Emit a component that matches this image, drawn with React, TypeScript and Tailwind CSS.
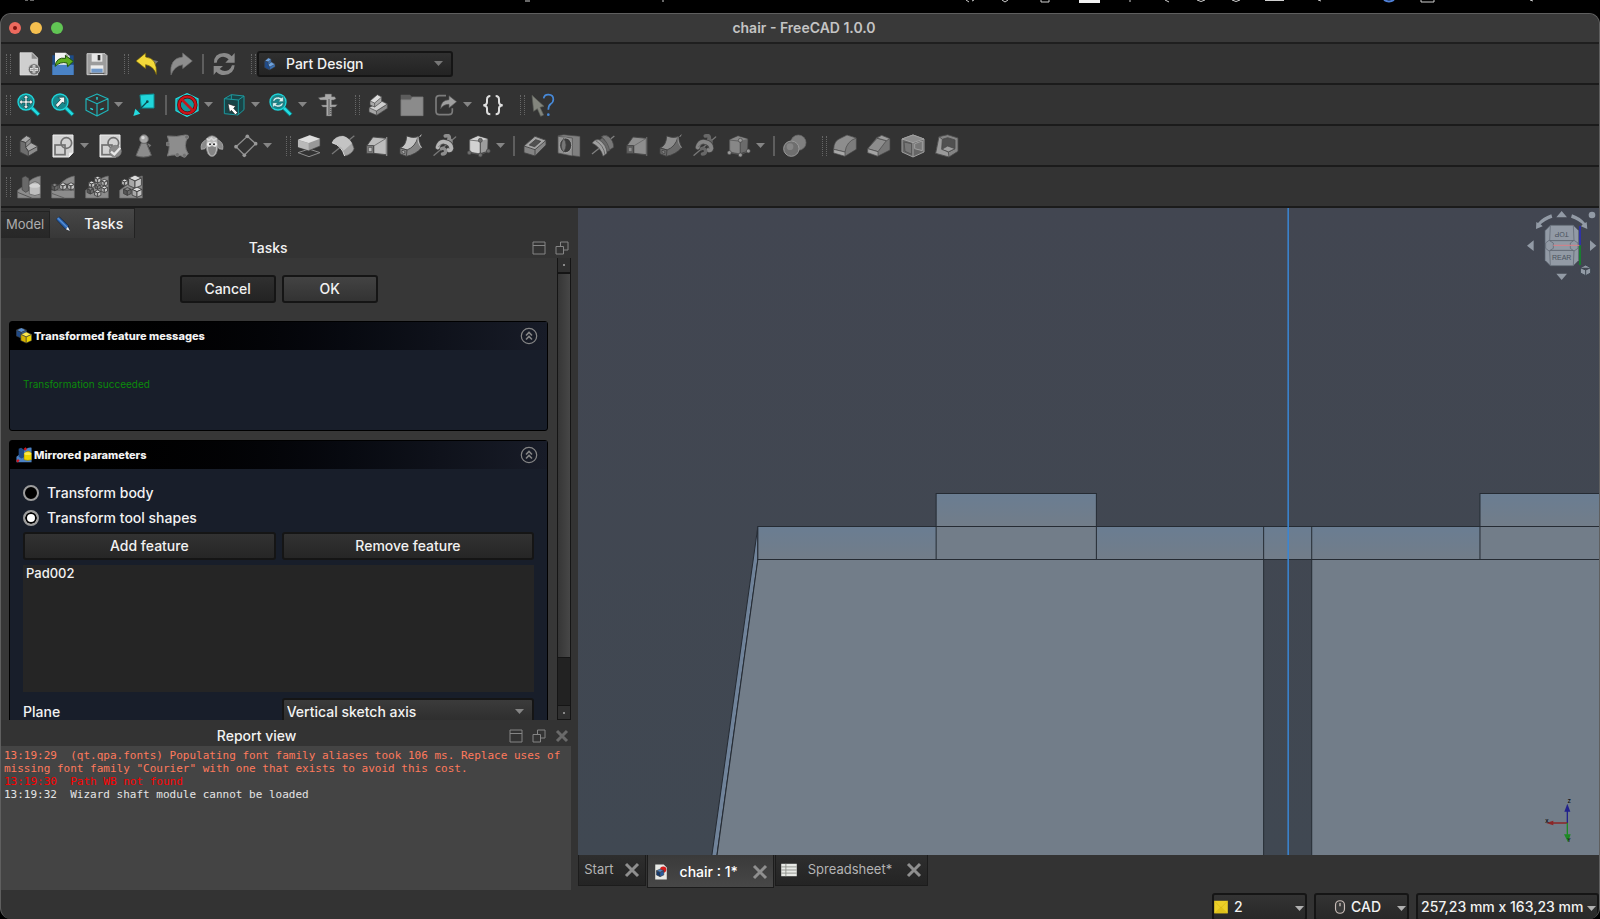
import { Fragment, type ReactNode } from 'react'

type CubeProps = { x: number; y: number; s: number; c?: [string, string, string] }

const LIGHT: [string, string, string] = ['#dcdcdc', '#a8a8a8', '#c4c4c4']
const MID: [string, string, string] = ['#a6a6a6', '#6c6c6c', '#8a8a8a']
const DARK: [string, string, string] = ['#858585', '#565656', '#6b6b6b']

// isometric cube, x/y is the centre and s the edge length
const Cube = ({ x, y, s, c = LIGHT }: CubeProps) => {
	const w = s * 0.87
	const h = s * 0.4
	return (
		<g stroke="#3c3c3c" strokeWidth="2.5" strokeLinejoin="round">
			<path d={`M${x - w} ${y - h}L${x} ${y - 2 * h}L${x + w} ${y - h}L${x} ${y}Z`} fill={c[0]} />
			<path d={`M${x - w} ${y - h}L${x} ${y}V${y + s}L${x - w} ${y + s - h}Z`} fill={c[1]} />
			<path d={`M${x + w} ${y - h}L${x} ${y}V${y + s}L${x + w} ${y + s - h}Z`} fill={c[2]} />
		</g>
	)
}

const Lens = ({ children }: { children: ReactNode }) => (
	<>
		<path d="M44 44L66 66" stroke="#0d6f74" strokeWidth="13" />
		<path d="M45 45L65 65" stroke="#22dbe0" strokeWidth="8" />
		<circle cx="27" cy="27" r="24" fill="#17888d" stroke="#1fd3d8" strokeWidth="4" />
		{children}
	</>
)

const Ramp = () => (
	<path d="M2 46L26 28Q48 6 70 3V69H2Z" fill="#8c8c8c" stroke="#6a6a6a" strokeWidth="2" />
)

const loft = (a: string, b: string) => (
	<g stroke="#404040" strokeWidth="2.5" strokeLinejoin="round">
		<path d="M5 36L24 9L64 13V64L26 58L6 58Z" fill={b} />
		<path d="M24 9L64 13V62L26 58V36L5 36Z" fill={a} />
		<path d="M26 36L62 14" stroke="#666" />
		<path d="M5 35H26V58H5Z" fill={b} />
		<path d="M10 40H21V53H10Z" fill={a} stroke="#555" />
		<path d="M65 9V66" stroke={b} strokeWidth="4" />
	</g>
)

const pipe = (a: string, b: string) => (
	<g stroke="#404040" strokeWidth="2.5" strokeLinejoin="round">
		<path d="M23 6Q42 14 57 8L68 41Q50 62 22 67L3 59V42Q22 34 23 6Z" fill={b} />
		<path d="M23 6Q42 14 57 8Q50 38 24 48L4 42Q22 34 23 6Z" fill={a} />
		<path d="M3 42L24 48L22 67L3 59Z" fill={b} />
		<path d="M9 49L18 52L17 59L9 56Z" fill={a} />
		<path d="M57 8Q56 30 68 41M67 2L62 9" fill="none" stroke={a} strokeWidth="3" />
	</g>
)

const helix = (a: string, b: string) => (
	<g fill="none" strokeLinecap="round">
		<path d="M3 64L68 9" stroke="#777" strokeWidth="4" />
		<path d="M37 6Q52 2 48 15Q58 22 50 34" stroke={b} strokeWidth="11" />
		<path d="M14 40Q20 20 36 24Q54 27 55 43Q54 50 46 48" stroke="#444" strokeWidth="16" />
		<path d="M14 40Q20 20 36 24Q54 27 55 43Q54 50 46 48" stroke={a} strokeWidth="12" />
		<path d="M25 44Q34 40 38 50Q38 60 28 60" stroke={b} strokeWidth="10" />
		<path d="M17 38Q26 26 38 32Q46 36 48 43" stroke="#555" strokeWidth="2" />
	</g>
)

const primitive = (c: [string, string, string], dot: string) => (
	<>
		<path d="M8 17L33 5L63 15L62 52L36 60L8 54Z" fill={c[2]} stroke="#444" strokeWidth="2" />
		<path d="M8 17L33 7L62 15L40 21Z" fill={c[0]} />
		<path d="M8 18L40 22V60L8 54Z" fill={c[0]} stroke="#555" strokeWidth="2" />
		<path d="M40 20V62L7 56M40 62L64 52" fill="none" stroke="#555" strokeWidth="3" />
		<g fill={dot} stroke="#444" strokeWidth="2">
			<circle cx="40" cy="19" r="6" />
			<circle cx="7" cy="56" r="6" />
			<circle cx="40" cy="63" r="6" />
			<circle cx="64" cy="51" r="6" />
		</g>
	</>
)

const sketch = (
	<>
		<path d="M6 3H66V56L54 69H6Z" fill="#d2d2d2" stroke="#efefef" strokeWidth="3" />
		<path d="M66 56H54V69Z" fill="#f2f2f2" />
		<g fill="none" stroke="#707070" strokeWidth="5">
			<rect x="12" y="33" width="30" height="29" />
			<circle cx="46" cy="27" r="16" />
		</g>
	</>
)

const body = (c: [string, string, string]) => (
	<g stroke="#3c3c3c" strokeWidth="2.5" strokeLinejoin="round">
		<path d="M9 20L28 5L42 12V26L62 37V50L34 67L9 54Z" fill={c[2]} />
		<path d="M9 20L28 5L42 12L26 26Z" fill={c[0]} />
		<path d="M26 40L42 26L62 37L34 52Z" fill={c[0]} />
		<path d="M9 20L26 26V40L34 52V67L9 54Z" fill={c[1]} />
	</g>
)

const icons: Record<string, ReactNode> = {
	'New document': (
		<>
			<path d="M9 2H46L62 18V69H9Z" fill="#cfcfcf" stroke="#e2e2e2" strokeWidth="2" />
			<path d="M44 2L62 20H44Z" fill="#8e8e8e" />
			<circle cx="51" cy="52" r="17" fill="#6e6e6e" stroke="#c8c8c8" strokeWidth="2.5" />
			<path d="M51 40V64M39 52H63" stroke="#f0f0f0" strokeWidth="8" />
			<path d="M51 41V63M40 52H62" stroke="#a2a2a2" strokeWidth="4" />
		</>
	),
	Open: (
		<>
			<path d="M4 10H68V68H4Z" fill="#1d4b87" />
			<path d="M12 2H44L56 12V50H12Z" fill="#f4f4f4" />
			<path d="M44 2L56 13H44Z" fill="#b0b0b0" />
			<path d="M4 38H68V69H4Z" fill="#4a83c6" />
			<path d="M12 43Q16 14 44 19L43 10L67 28L50 44L48 33Q28 28 12 43Z" fill="#5fae1f" stroke="#20500a" strokeWidth="3" />
		</>
	),
	Save: (
		<>
			<path d="M6 5H60L66 11V68H6Z" fill="#9c9c9c" stroke="#c8c8c8" strokeWidth="3" />
			<rect x="20" y="5" width="32" height="24" fill="#e6e6e6" />
			<rect x="38" y="9" width="8" height="16" fill="#333" />
			<rect x="17" y="40" width="38" height="28" fill="#ececec" />
			<rect x="19" y="50" width="34" height="12" fill="#7198c8" />
			<path d="M14 64H58" stroke="#444" strokeWidth="3" />
		</>
	),
	Undo: (
		<>
			<path d="M44 22L70 28L52 46Z" fill="#777" />
			<path d="M3 27L32 3V15Q68 18 64 68Q56 42 32 38V50Z" fill="#f3d93a" stroke="#6b5a08" strokeWidth="2" />
		</>
	),
	Redo: <path d="M70 27L41 3V15Q0 18 6 69Q16 42 41 38V50Z" fill="#8d8d8d" stroke="#6a6a6a" strokeWidth="2" />,
	Refresh: (
		<g fill="#8a8a8a">
			<path d="M6 32Q6 4 36 3Q50 3 59 13L68 3V32H40L50 22Q36 9 22 18Q14 24 14 32Z" />
			<path d="M68 40Q66 68 36 69Q22 69 13 59L5 69V42H33L23 51Q36 62 50 54Q58 48 60 40Z" />
		</g>
	),
	'Fit all': (
		<Lens>
			<path d="M27 6L35 15H30V24H39V19L48 27L39 35V30H30V39H35L27 48L19 39H24V30H15V35L6 27L15 19V24H24V15H19Z" fill="#e9e9e9" stroke="#14494c" strokeWidth="2" />
		</Lens>
	),
	'Fit selection': (
		<Lens>
			<path d="M41 12V33L35 27L20 43L13 36L28 20L21 13Z" fill="#f2f2f2" stroke="#14494c" strokeWidth="2.5" />
		</Lens>
	),
	Isometric: (
		<g fill="none" stroke="#1fb4b9" strokeWidth="3.5" strokeLinejoin="round">
			<path d="M36 3L69 17V52L36 69L3 52V17ZM3 17L36 32L69 17M36 32V69" />
			<path d="M36 12V20M16 46L24 50M46 50L56 46" stroke="#26dfe4" strokeWidth="4" />
		</g>
	),
	'Align to selection': (
		<>
			<path d="M24 6L66 3V45L28 45Z" fill="#21d5da" stroke="#0c8e93" strokeWidth="3" />
			<path d="M46 26L14 58" stroke="#0b4d50" strokeWidth="4" />
			<path d="M4 69L10 47L25 62Z" fill="#24dbe0" />
			<circle cx="46" cy="26" r="4" fill="#0b4d50" />
		</>
	),
	'Draw style': (
		<>
			<path d="M36 2L69 18V53L36 70L3 53V18Z" fill="#14979c" stroke="#24d8dd" strokeWidth="4" />
			<circle cx="37" cy="36" r="25" fill="none" stroke="#5a0808" strokeWidth="11" />
			<circle cx="37" cy="36" r="25" fill="none" stroke="#c8141a" strokeWidth="7" />
			<path d="M20 19L54 53" stroke="#c8141a" strokeWidth="8" />
		</>
	),
	'Selection filter': (
		<>
			<path d="M7 17L28 5L66 9V50L48 66L7 62Z" fill="#194447" stroke="#1c9a9f" strokeWidth="3" strokeLinejoin="round" />
			<path d="M7 17L49 21L66 9M49 21V66M28 5V20" fill="none" stroke="#1c9a9f" strokeWidth="3" />
			<path d="M18 32L41 40L35 46L47 59L40 65L28 52L23 58Z" fill="#fff" stroke="#222" strokeWidth="2" />
		</>
	),
	Zoom: (
		<Lens>
			<path d="M11 25Q14 11 29 12L38 15L43 10V26H28L33 20Q21 15 16 25ZM43 30Q40 44 25 42L16 39L11 44V29H26L21 35Q33 39 38 30Z" fill="#d9f3f3" stroke="#14595c" strokeWidth="1.5" />
		</Lens>
	),
	Measure: (
		<g fill="#a9a9a9" stroke="#5b5b5b" strokeWidth="1.5">
			<path d="M27 3H47V11H56L60 17L53 21H47V35H64L58 42H47V69H31V42H20L16 36H31V21H13L7 14L27 11Z" />
			<path d="M39 18V66M42 44H47M42 50H47M42 56H47M42 62H47" stroke="#555" strokeWidth="3" />
		</g>
	),
	'Create part': (
		<g stroke="#444" strokeWidth="2" strokeLinejoin="round">
			<path d="M9 44L48 24L64 33V46L32 67L9 57Z" fill="#a6a6a6" />
			<path d="M31 54L64 33V46L32 67Z" fill="#8e8e8e" />
			<path d="M9 44L46 24L64 33L31 54Z" fill="#cfcfcf" />
			<path d="M12 24L34 5L47 12V26L26 42L12 36Z" fill="#aaa" />
			<path d="M12 24L34 5L47 12L26 30Z" fill="#dcdcdc" />
			<path d="M26 30V42" />
		</g>
	),
	'Create group': (
		<>
			<path d="M2 5H30L36 11H70V69H2Z" fill="#5c5c5c" />
			<path d="M3 20H32L37 12H69V68H3Z" fill="#8b8b8b" stroke="#777" strokeWidth="2" />
		</>
	),
	'Link actions': (
		<>
			<path d="M36 8H16Q6 8 6 18V55Q6 65 16 65H44Q55 65 55 55V46" fill="none" stroke="#7c7c7c" strokeWidth="5" />
			<path d="M20 47Q20 21 45 20V8L68 26L45 45V34Q29 34 20 47Z" fill="#a0a0a0" stroke="#555" strokeWidth="2" />
		</>
	),
	Varset: (
		<g fill="none" stroke="#dedede" strokeWidth="6">
			<path d="M28 9Q18 9 18 20V28Q18 36 7 37Q18 38 18 46V54Q18 64 28 64" />
			<path d="M44 9Q54 9 54 20V28Q54 36 65 37Q54 38 54 46V54Q54 64 44 64" />
		</g>
	),
	"What's this": (
		<>
			<path d="M3 7L39 40L27 43L38 66L29 70L19 47L8 55Z" fill="#83857d" stroke="#5e605a" strokeWidth="2" />
			<path d="M38 16Q40 4 53 5Q67 6 67 19Q67 28 59 33Q52 38 52 50" fill="none" stroke="#4789d8" strokeWidth="5" />
			<circle cx="52" cy="65" r="4" fill="#4789d8" />
		</>
	),
	'Create body': body(['#aaaaaa', '#6e6e6e', '#8c8c8c']),
	'Create sketch': sketch,
	'Validate sketch': (
		<>
			{sketch}
			<circle cx="52" cy="52" r="18" fill="#8a8a8a" stroke="#777" strokeWidth="2" />
			<path d="M39 53L49 61L67 41" fill="none" stroke="#e8e8e8" strokeWidth="7" />
		</>
	),
	'Check geometry': (
		<>
			<path d="M28 27H43L58 64Q36 74 12 65Z" fill="#8c8c8c" stroke="#646464" strokeWidth="3" />
			<path d="M46 27L58 34L52 40Z" fill="#777" />
			<circle cx="36" cy="15" r="13" fill="#a6a6a6" stroke="#6a6a6a" strokeWidth="3" />
			<circle cx="33" cy="11" r="5" fill="#d8d8d8" />
		</>
	),
	'Shape binder': (
		<>
			<path d="M4 6Q32 10 58 3L66 8Q50 36 67 60L55 69Q32 58 4 66Q16 36 4 6Z" fill="#8d8d8d" stroke="#757575" strokeWidth="3" />
			<g fill="#707070" stroke="#999" strokeWidth="1.5">
				<circle cx="6" cy="30" r="6" />
				<circle cx="62" cy="9" r="6" />
				<circle cx="34" cy="62" r="6" />
				<circle cx="55" cy="64" r="6" />
			</g>
		</>
	),
	Clone: (
		<>
			<path d="M19 17Q0 26 4 46L15 44L22 26M53 17Q72 26 68 46L57 44L50 26" fill="#8a8a8a" stroke="#a5a5a5" strokeWidth="3" />
			<path d="M19 14Q36 -4 53 14L54 36Q52 66 36 68Q20 66 18 36Z" fill="#b9b9b9" stroke="#808080" strokeWidth="2" />
			<path d="M24 40Q36 34 48 40Q48 62 36 65Q25 62 24 40Z" fill="#858585" />
			<circle cx="28" cy="31" r="7" fill="#eee" />
			<circle cx="44" cy="31" r="7" fill="#eee" />
			<circle cx="30" cy="31" r="3" fill="#222" />
			<circle cx="42" cy="31" r="3" fill="#222" />
			<path d="M20 14L27 19L34 12L41 19L50 13" fill="none" stroke="#d5d5d5" strokeWidth="4" />
		</>
	),
	Datum: (
		<>
			<path d="M40 7L65 29L31 63L6 38Z" fill="none" stroke="#8e8e8e" strokeWidth="4" />
			<g fill="#999">
				<circle cx="40" cy="7" r="5.5" />
				<circle cx="65" cy="29" r="5.5" />
				<circle cx="31" cy="64" r="5.5" />
				<circle cx="6" cy="38" r="5.5" />
			</g>
		</>
	),
	Pad: (
		<g strokeLinejoin="round">
			<path d="M3 56L36 45L69 56L36 68Z" fill="none" stroke="#8c8c8c" strokeWidth="3" />
			<path d="M3 17L38 4L69 14V36L35 50L3 40Z" fill="#999" stroke="#484848" strokeWidth="2" />
			<path d="M3 17L38 4L69 14L35 27Z" fill="#dedede" />
			<path d="M3 18L35 28V49L3 39Z" fill="#b9b9b9" />
		</g>
	),
	Revolution: (
		<>
			<path d="M3 60L70 5" stroke="#777" strokeWidth="4" />
			<path d="M3 26Q12 6 36 6Q62 14 69 44Q64 60 41 66Q32 34 3 26Z" fill="#a6a6a6" stroke="#666" strokeWidth="2" />
			<path d="M3 26Q12 6 36 6Q54 11 63 28L38 50Q26 30 3 26Z" fill="#c4c4c4" />
			<path d="M3 26Q32 34 41 66" fill="none" stroke="#ddd" strokeWidth="3" />
		</>
	),
	'Additive loft': loft('#bdbdbd', '#858585'),
	'Additive pipe': pipe('#c4c4c4', '#848484'),
	'Additive helix': helix('#b5b5b5', '#8d8d8d'),
	'Additive primitive': primitive(['#d2d2d2', '#a0a0a0', '#9c9c9c'], '#6e6e6e'),
	Pocket: (
		<g stroke="#404040" strokeWidth="2.5" strokeLinejoin="round">
			<path d="M3 36L36 7L69 19V33L36 66L3 56Z" fill="#848484" />
			<path d="M3 36L36 7L69 19L36 47Z" fill="#a3a3a3" />
			<path d="M19 33L38 17L53 22L35 38Z" fill="#505050" />
			<path d="M36 47V66" />
		</g>
	),
	Hole: (
		<g stroke="#4a4a4a" strokeWidth="2">
			<path d="M3 5L20 2L69 7V68L46 65L3 57Z" fill="#808080" />
			<path d="M3 7L46 12V66L3 57Z" fill="#929292" />
			<ellipse cx="26" cy="34" rx="18" ry="22" fill="#3b3b3b" stroke="#bbb" />
			<path d="M20 13Q34 32 20 55Q6 38 20 13Z" fill="#777" />
		</g>
	),
	Groove: (
		<g stroke="#4b4b4b" strokeWidth="2">
			<path d="M3 60L70 6" stroke="#808080" strokeWidth="4" />
			<path d="M31 8Q42 0 53 8Q68 20 68 40L52 50Q50 24 31 8Z" fill="#777" />
			<path d="M22 20L34 12Q52 26 56 50L44 54Z" fill="#696969" />
			<path d="M3 27Q12 14 24 17Q47 32 48 58L36 67Q30 40 3 27Z" fill="#a0a0a0" />
			<path d="M14 20Q38 34 42 62" fill="none" />
		</g>
	),
	'Subtractive loft': loft('#8e8e8e', '#626262'),
	'Subtractive pipe': pipe('#8e8e8e', '#6a6a6a'),
	'Subtractive helix': helix('#858585', '#676767'),
	'Subtractive primitive': primitive(['#878787', '#5a5a5a', '#6b6b6b'], '#9a9a9a'),
	Boolean: (
		<>
			<circle cx="46" cy="26" r="23" fill="#7f7f7f" stroke="#666" strokeWidth="2" />
			<circle cx="25" cy="44" r="23" fill="#6f6f6f" stroke="#999" strokeWidth="3" />
			<circle cx="21" cy="38" r="10" fill="#858585" />
		</>
	),
	Fillet: (
		<g stroke="#474747" strokeWidth="2" strokeLinejoin="round">
			<path d="M2 46Q2 20 24 12L42 3L70 12V46L36 67L2 56Z" fill="#7c7c7c" />
			<path d="M2 46Q2 20 24 12L42 3L70 12Q40 22 36 54Z" fill="#8d8d8d" />
			<path d="M2 46L36 54V67L2 57Z" fill="#a8a8a8" />
		</g>
	),
	Chamfer: (
		<g stroke="#474747" strokeWidth="2" strokeLinejoin="round">
			<path d="M2 44L30 10L44 4L69 14V48L32 67L2 56Z" fill="#777" />
			<path d="M2 44L30 13L58 20L33 53Z" fill="#8d8d8d" />
			<path d="M30 12L44 4L69 14L58 20Z" fill="#9b9b9b" />
			<path d="M2 44L33 53V67L2 56Z" fill="#a3a3a3" />
		</g>
	),
	Draft: (
		<g stroke="#a0a0a0" strokeWidth="3" strokeLinejoin="round">
			<path d="M3 15L36 3L69 15V54L36 69L3 54Z" fill="#666" />
			<path d="M3 15L36 3L69 15L36 26Z" fill="#8c8c8c" />
			<path d="M9 24L32 29V61L12 52Z" fill="#777" stroke="#555" />
			<path d="M36 26V69M41 29L64 21V50L41 44Z" fill="#777" />
		</g>
	),
	Thickness: (
		<g stroke="#4a4a4a" strokeWidth="2.5" strokeLinejoin="round">
			<path d="M12 8L38 2L69 12V52L42 69L2 58Z" fill="#848484" />
			<path d="M22 16L38 11L60 18V44L40 54L20 46Z" fill="#505050" />
			<path d="M20 46L38 36L60 44L40 54Z" fill="#9d9d9d" />
			<path d="M12 8L22 16L20 46L40 54L42 69L2 58Z" fill="#9a9a9a" />
		</g>
	),
	Mirrored: (
		<>
			<Ramp />
			<path d="M15 8L25 3L36 10V46L26 52L15 44Z" fill="#696969" stroke="#3f3f3f" strokeWidth="2" />
			<path d="M37 32Q40 22 54 20Q68 22 70 32V57Q54 66 37 57Z" fill="#bdbdbd" stroke="#555" strokeWidth="2" />
			<ellipse cx="53" cy="32" rx="16" ry="6" fill="#d2d2d2" />
			<path d="M2 52L44 69" stroke="#555" strokeWidth="3" />
		</>
	),
	'Linear pattern': (
		<>
			<Ramp />
			<path d="M2 45H70" stroke="#555" strokeWidth="3" />
			<Cube x={11} y={35} s={12} c={DARK} />
			<Cube x={36} y={33} s={12} />
			<Cube x={60} y={33} s={12} />
			<path d="M2 55L40 69" stroke="#606060" strokeWidth="3" />
		</>
	),
	'Polar pattern': (
		<>
			<Ramp />
			<Cube x={38} y={13} s={11} />
			<Cube x={58} y={22} s={11} />
			<Cube x={20} y={27} s={11} />
			<Cube x={58} y={42} s={11} />
			<Cube x={16} y={46} s={11} c={DARK} />
			<Cube x={38} y={34} s={9} c={MID} />
			<Cube x={38} y={54} s={11} />
		</>
	),
	MultiTransform: (
		<>
			<Ramp />
			<Cube x={48} y={18} s={22} />
			<Cube x={17} y={21} s={11} />
			<Cube x={25} y={48} s={13} c={DARK} />
			<Cube x={54} y={50} s={17} />
		</>
	),
	Body: body(['#6ea3e0', '#1f4c8c', '#3a72b9']),
	Transformed: (
		<>
			<Cube x={24} y={20} s={26} c={['#5b8fd0', '#204a86', '#3465a4']} />
			<Cube x={46} y={40} s={28} c={['#fce94f', '#d6b300', '#edd400']} />
		</>
	),
	MirroredBlue: (
		<>
			<path d="M2 44L26 26Q50 0 70 3V69H2Z" fill="#4c82c4" />
			<path d="M12 8L23 3L36 12V46L24 52L12 44Z" fill="#204a86" />
			<path d="M36 32Q40 20 54 18Q68 20 70 32V57Q54 64 36 57Z" fill="#edd400" stroke="#7a6500" strokeWidth="2" />
			<ellipse cx="53" cy="30" rx="16" ry="6" fill="#fce94f" />
			<path d="M4 66L13 58M38 13L46 5" stroke="#d4141a" strokeWidth="10" />
		</>
	),
	Pencil: (
		<>
			<path d="M4 16L20 2L62 44L67 67L46 60Z" fill="#10233f" />
			<path d="M6 15L18 4L60 45L48 58Z" fill="#2b62ab" />
			<path d="M12 9L55 51" stroke="#5a92d8" strokeWidth="5" />
			<path d="M58 48L67 67L49 60Z" fill="#eee" />
		</>
	),
	Document: (
		<>
			<path d="M10 2H48L62 16V70H10Z" fill="#e8eae6" />
			<circle cx="46" cy="25" r="14" fill="#d41c1c" />
			<Cube x={32} y={38} s={19} c={['#4f86c8', '#143a70', '#275ca3']} />
		</>
	),
	Table: (
		<>
			<rect x="1" y="8" width="70" height="56" fill="#e8eae6" />
			<path d="M1 22H71M1 36H71M1 50H71M22 8V64" stroke="#8d8f8a" strokeWidth="4" />
		</>
	),
	Mouse: (
		<>
			<rect x="13" y="4" width="46" height="64" rx="22" fill="#3a3a3a" stroke="#c9bdb8" strokeWidth="6" />
			<path d="M36 16V32" stroke="#c9bdb8" strokeWidth="7" />
		</>
	),
	Notification: (
		<>
			<rect x="1" y="4" width="70" height="64" fill="#ecd028" />
			<path d="M1 68L36 34L71 68Z" fill="#dfc11a" />
			<path d="M1 4L36 40L71 4" fill="none" stroke="#d3b512" strokeWidth="3" />
		</>
	),
}

const Icon = ({ name, className = 'size-6' }: { name: string; className?: string }) => (
	<svg viewBox="0 0 72 72" className={`shrink-0 ${className}`} aria-hidden="true">
		{icons[name]}
	</svg>
)

const Triangle = ({ className = '' }: { className?: string }) => (
	<svg viewBox="0 0 9 5" className={`h-[5px] w-[9px] ${className}`} aria-hidden="true">
		<path d="M0 0H9L4.5 5Z" fill="currentColor" />
	</svg>
)

const Handle = ({ first = false }: { first?: boolean }) => (
	<div className={`flex h-5 shrink-0 justify-end ${first ? 'w-[11px]' : 'w-4'}`}>
		<div className="mr-px w-[5px] border-x border-dotted border-[#666]" />
	</div>
)

// '|' is a separator, '#' a drag handle and 'v' the drop-down arrow of the tool before it
const toolbars: string[][] = [
	['New document', 'Open', 'Save', '#', 'Undo', 'Redo', '|', 'Refresh', '#'],
	['Fit all', 'Fit selection', 'Isometric', 'v', 'Align to selection', '|', 'Draw style', 'v', 'Selection filter', 'v', 'Zoom', 'v', 'Measure', '#', 'Create part', 'Create group', 'Link actions', 'v', 'Varset', '#', "What's this"],
	['Create body', 'Create sketch', 'v', 'Validate sketch', 'Check geometry', 'Shape binder', 'Clone', 'Datum', 'v', '#', 'Pad', 'Revolution', 'Additive loft', 'Additive pipe', 'Additive helix', 'Additive primitive', 'v', '|', 'Pocket', 'Hole', 'Groove', 'Subtractive loft', 'Subtractive pipe', 'Subtractive helix', 'Subtractive primitive', 'v', '|', 'Boolean', '#', 'Fillet', 'Chamfer', 'Draft', 'Thickness'],
	['Mirrored', 'Linear pattern', 'Polar pattern', 'MultiTransform'],
]

const Toolbar = ({ tools, children }: { tools: string[]; children?: ReactNode }) => (
	<div role="toolbar" className="flex h-[41px] shrink-0 items-center border-b-2 border-[#1b1b1b]">
		<Handle first />
		{tools.map((tool, index) => (
			<Fragment key={index}>
				{tool === '|' ? (
					<div className="flex w-[9px] justify-center">
						<div className="h-5 w-0.5 bg-[#5e5e5e]" />
					</div>
				) : tool === '#' ? (
					<Handle />
				) : tool === 'v' ? (
					<button aria-label={`${tools[index - 1]} menu`} className="w-[13px] text-[#858585]">
						<Triangle />
					</button>
				) : (
					<button aria-label={tool} className="grid size-[34px] shrink-0 place-items-center">
						<Icon name={tool} />
					</button>
				)}
			</Fragment>
		))}
		{children}
	</div>
)

const DockIcon = ({ type }: { type: 'shade' | 'float' | 'close' }) => (
	<button aria-label={type} className="size-[14px]">
		<svg viewBox="0 0 14 14" fill="none" stroke="#858585" className="size-[14px]">
			{type === 'shade' && <path d="M1 1H13V13H1ZM1 4.5H13" />}
			{type === 'float' && <path d="M5.5 5V1H13V9H9M1 5.5H8.5V13H1Z" />}
			{type === 'close' && <path d="M2 2L12 12M12 2L2 12" strokeWidth="3" stroke="#6a6a6a" />}
		</svg>
	</button>
)

const PushButton = ({ children, className = '' }: { children: ReactNode; className?: string }) => (
	<button className={`h-7 rounded-[3px] border-2 border-[#151515] text-sm font-medium ${className}`}>
		{children}
	</button>
)

const GroupBox = ({ icon, title, children }: { icon: string; title: string; children: ReactNode }) => (
	<section className="shrink-0 rounded-[3px] border border-black bg-[#181e2a]">
		<header className="flex h-7 items-center bg-linear-to-r from-black to-[#181c28] pr-[9px] pl-1.5">
			<Icon name={icon} className="size-4" />
			<h2 className="ml-0.5 flex-1 text-[11px] font-extrabold">{title}</h2>
			<button aria-label={`Collapse ${title}`}>
				<svg viewBox="0 0 18 18" fill="none" stroke="#858585" className="size-[18px]">
					<circle cx="9" cy="9" r="7.7" strokeWidth="1.2" />
					<path d="M6 8.5L9 5.5L12 8.5M6 12.5L9 9.5L12 12.5" strokeWidth="1.6" />
				</svg>
			</button>
		</header>
		{children}
	</section>
)

const TasksPanel = () => (
	<div className="flex min-h-0 flex-1 bg-[#373737]">
		<div className="flex min-w-0 flex-1 flex-col gap-[9px] overflow-hidden pr-[9px] pl-2">
			<div className="flex shrink-0 justify-center gap-1.5 pt-[17px] pb-[9px]">
				<PushButton className="w-24 bg-linear-to-b from-[#303030] to-[#232323]">Cancel</PushButton>
				<PushButton className="w-24 bg-linear-to-b from-[#434343] to-[#333]">OK</PushButton>
			</div>
			<GroupBox icon="Transformed" title="Transformed feature messages">
				<p className="h-20 px-[13px] pt-[27px] text-[10px] leading-[14px] text-[#0b8a0b]">
					Transformation succeeded
				</p>
			</GroupBox>
			<GroupBox icon="MirroredBlue" title="Mirrored parameters">
				<div className="flex flex-col px-[13px] pt-[11px] pb-3">
					{['Transform body', 'Transform tool shapes'].map((label, index) => (
						<label key={label} className="flex h-[25px] items-center gap-2 text-sm font-medium">
							<input
								type="radio"
								name="mode"
								defaultChecked={index === 1}
								className="size-4 appearance-none rounded-full border-2 border-[#9c9c9c] bg-black checked:bg-white checked:shadow-[inset_0_0_0_2px_#000]"
							/>
							{label}
						</label>
					))}
					<div className="mt-0.5 flex gap-1.5">
						<PushButton className="flex-1 bg-linear-to-b from-[#323232] to-[#262626]">Add feature</PushButton>
						<PushButton className="flex-1 bg-linear-to-b from-[#323232] to-[#262626]">Remove feature</PushButton>
					</div>
					<ul className="mt-[5px] h-[127px] bg-[#252525] px-[3px] text-[13px] leading-4 font-medium">
						<li>Pad002</li>
					</ul>
					<div className="mt-1.5 flex items-center gap-1.5">
						<label htmlFor="plane" className="flex-1 text-sm font-medium">
							Plane
						</label>
						<div className="relative flex-1">
							<select
								id="plane"
								className="h-7 w-full appearance-none rounded-[3px] border-2 border-[#151515] bg-linear-to-b from-[#3b3b3b] to-[#2c2c2c] px-[3px] text-sm font-medium"
							>
								<option>Vertical sketch axis</option>
							</select>
							<Triangle className="absolute top-[11px] right-2.5 text-[#858585]" />
						</div>
					</div>
				</div>
			</GroupBox>
		</div>
		<div className="flex w-[14px] flex-col border-x border-[#151515] bg-[#222]">
			<div className="grid h-4 place-items-center border-b-2 border-[#151515] bg-[#303030]">
				<div className="size-0.5 bg-[#888]" />
			</div>
			<div className="basis-[384px] border-b border-[#151515] bg-linear-to-r from-[#363636] to-[#474747]" />
			<div className="flex-1" />
			<div className="grid h-[15px] place-items-center border-y border-[#151515] bg-[#303030]">
				<div className="size-0.5 bg-[#888]" />
			</div>
		</div>
	</div>
)

const report = [
	{
		text: '13:19:29  (qt.qpa.fonts) Populating font family aliases took 106 ms. Replace uses of missing font family "Courier" with one that exists to avoid this cost.',
		color: 'text-[#ff7a5c]',
	},
	{ text: '13:19:30  Path WB not found', color: 'text-[#ff0000]' },
	{ text: '13:19:32  Wizard shaft module cannot be loaded', color: 'text-[#e4e4e4]' },
]

const Scene = () => (
	<svg viewBox="0 0 1020 646" preserveAspectRatio="xMidYMid slice" className="absolute inset-0 size-full">
		<defs>
			<linearGradient id="bg" x1="0" y1="0" x2="0" y2="1">
				<stop offset="0" stopColor="#424651" />
				<stop offset="1" stopColor="#404852" />
			</linearGradient>
			<linearGradient id="band" x1="0" y1="0" x2="0" y2="1">
				<stop offset="0" stopColor="#6a7d92" />
				<stop offset="1" stopColor="#727d89" />
			</linearGradient>
		</defs>
		<rect width="1020" height="646" fill="url(#bg)" />
		<g stroke="#252b33">
			<path d="M180 318L134 647H139L180 351Z" fill="#70839a" />
			<path d="M180 351H685V648H139Z" fill="#727d89" />
			<path d="M733 351H1021V648H733Z" fill="#727d89" />
			<path d="M180 318H1021V351H180Z" fill="url(#band)" />
			<path d="M358 285H518V318H358ZM901 285H1021V318H901Z" fill="url(#band)" />
			<path d="M358 318H518V351H358ZM901 318H1021V351H901Z" fill="#727d89" />
			<path d="M685 318V351M733 318V351" />
		</g>
		<path d="M709.500 0V647" stroke="#3a86d4" strokeWidth="1.5" />
	</svg>
)

const NavCube = () => (
	<svg viewBox="75 24 222 246" className="absolute top-0 right-0 h-[82px] w-[74px]">
		<g fill="#929aa5">
			<path d="M169 52L185 33L201 52ZM169 221L185 240L201 221ZM101 121V153L81 137ZM270 121V153L289 137Z" />
			<circle cx="276" cy="45" r="10" />
			<path d="M154 43L157 53Q132 62 122 73L128 79L108 87L109 66L114 69Q128 52 154 43ZM216 43L213 53Q238 62 248 73L243 79L262 87L260 66L255 69Q242 52 216 43Z" />
			<path d="M151 76H220L236 92V181L220 197H151L135 181V92Z" stroke="#59616d" strokeWidth="2" />
			<g stroke="#59616d" strokeWidth="2">
				<path d="M151 76H220L222 122H149ZM149 151H222L220 197H151Z" />
				<path d="M151 122H220V151H151Z" />
				<path d="M137 129L147 121L160 129V145L147 153L137 145ZM211 129L222 121L234 129V145L222 153L211 145Z" />
				<path d="M241 203L257 195L272 203V219L257 227L241 219ZM241 203L257 210L272 203M257 210V227" stroke="#3d4550" strokeWidth="3" />
			</g>
		</g>
		<g fill="#4b525d" fontFamily="Liberation Sans, sans-serif" fontSize="21" textAnchor="middle">
			<text x="185" y="109" transform="rotate(180 185 102)">TOP</text>
			<text x="185" y="179">REAR</text>
		</g>
		<path d="M160 136H240" stroke="#d97f86" strokeWidth="3" />
		<path d="M240 78V136" stroke="#2c30b8" strokeWidth="5" />
		<path d="M240 136V195" stroke="#12892c" strokeWidth="5" />
	</svg>
)

const AxisCross = () => (
	<svg viewBox="1080 45 111 150" className="absolute right-[22px] bottom-2.5 h-[50px] w-[37px]">
		<path d="M1162 129V92" stroke="#22228c" strokeWidth="4" />
		<path d="M1153 95L1162 71L1171 95Z" fill="#22228c" />
		<path d="M1162 129H1118" stroke="#8c2626" strokeWidth="4" />
		<path d="M1120 122L1098 129L1120 136Z" fill="#8c2626" />
		<path d="M1162 129V164" stroke="#1d8a24" strokeWidth="4" />
		<path d="M1152 163H1172L1164 187Z" fill="#1d8a24" />
		<g fill="#111" fontFamily="Liberation Sans, sans-serif" fontSize="15" fontWeight="bold">
			<text x="1163" y="68">Z</text>
			<text x="1096" y="129">X</text>
			<text x="1162" y="186">Y</text>
		</g>
	</svg>
)

const DocTab = ({ label, icon, active = false }: { label: string; icon?: string; active?: boolean }) => (
	<div
		role="tab"
		className={`flex items-center border-x border-b border-[#1c1c1c] ${
			active
				? 'h-[33px] bg-linear-to-b from-[#3a3a3a] to-[#474747] px-[5px] pt-0.5 text-sm font-medium text-white'
				: 'h-[31px] bg-linear-to-b from-[#2e2e2e] to-[#242424] px-[5px] text-[13px] text-[#b4b4b4]'
		}`}
	>
		{icon && <Icon name={icon} className="mr-[11px] size-4" />}
		{label}
		<button aria-label={`Close ${label}`} className={icon ? 'ml-3.5' : 'ml-2.5'}>
			<svg viewBox="0 0 16 16" stroke="#8f8f8f" strokeWidth="3" className="size-4">
				<path d="M2 2L14 14M14 2L2 14" />
			</svg>
		</button>
	</div>
)

const StatusSelect = ({ label, value, icon, className }: { label: string; value: string; icon?: string; className: string }) => (
	<div className="relative h-7">
		<select
			aria-label={label}
			className={`h-7 appearance-none rounded-[3px] border-2 border-[#151515] bg-linear-to-b from-[#333] to-[#282828] text-sm font-medium ${className}`}
		>
			<option>{value}</option>
		</select>
		{icon === 'Notification' && <Icon name={icon} className="absolute top-[7px] left-0.5 size-[14px]" />}
		{icon === 'Mouse' && <Icon name={icon} className="absolute top-[7px] left-[19px] size-[14px]" />}
		<Triangle className="absolute top-[13px] right-[3px] text-[#b0b0b0]" />
	</div>
)

const MacMenuBar = () => (
	<div className="h-[13px] shrink-0 bg-black">
		<svg viewBox="0 0 1600 13" preserveAspectRatio="none" className="h-[13px] w-full" fill="none" stroke="#d0d0d0">
			<path d="M25 0H28M30 0H34M525 1H530M663 0V2M966 0L969 2M972 1L974 0M1002 0L1005 2L1008 0M1041 0V2H1049V0M1130 0V2M1165 0L1169 2M1197 0Q1201 3 1205 0M1232 0Q1236 3 1240 0M1265 .5H1284M1318 0L1321 1M1421 0V2H1434V0M1530 0L1533 1" />
			<path d="M1079 1.500H1100" strokeWidth="3" stroke="#f2f2f2" />
			<path d="M1384 0Q1389 3 1394 0" stroke="#4f80d8" strokeWidth="2" />
		</svg>
	</div>
)

export default function App() {
	return (
		<div className="flex h-screen flex-col overflow-hidden bg-black font-[Inter,sans-serif] text-[#f2f2f2]">
			<MacMenuBar />
			<div className="flex min-h-0 flex-1 flex-col overflow-hidden rounded-[11px] border border-b-0 border-[#5f5f5f] bg-[#333]">
				<header className="flex h-[30px] shrink-0 items-center border-b-2 border-[#1f1f1f] bg-[#393939]">
					<div className="flex flex-1 gap-[9px] pl-2">
						<button aria-label="Close" className="grid size-3 place-items-center rounded-full bg-[#ed6a5e]">
							<span className="size-1 rounded-full bg-[#7c1410]" />
						</button>
						<button aria-label="Minimize" className="size-3 rounded-full bg-[#f5bf4f]" />
						<button aria-label="Zoom window" className="size-3 rounded-full bg-[#61c554]" />
					</div>
					<h1 className="text-sm font-semibold text-[#c4c4c4]">chair - FreeCAD 1.0.0</h1>
					<div className="flex-1" />
				</header>

				<Toolbar tools={toolbars[0]}>
					<div className="relative">
						<select
							aria-label="Workbench"
							className="h-[26px] w-[196px] appearance-none rounded-[3px] border-2 border-[#151515] bg-linear-to-b from-[#303030] to-[#232323] pl-[27px] text-sm font-medium"
						>
							<option>Part Design</option>
						</select>
						<Icon name="Body" className="absolute top-1.5 left-1.5 size-[14px]" />
						<Triangle className="absolute top-2.5 right-2.5 text-[#777]" />
					</div>
				</Toolbar>
				{toolbars.slice(1).map((tools, index) => (
					<Toolbar key={index} tools={tools} />
				))}

				<main className="flex min-h-0 flex-1">
					<aside className="flex w-[36%] shrink-0 flex-col pr-[5px]">
						<div role="tablist" className="flex h-[30px] shrink-0 items-end">
							<button
								role="tab"
								className="h-[27px] border-t border-r border-[#222] bg-linear-to-b from-[#303030] to-[#272727] px-[5px] text-[13px] text-[#adadad]"
							>
								Model
							</button>
							<button
								role="tab"
								aria-selected="true"
								className="flex h-[30px] items-center gap-[13px] border-t border-r border-[#222] bg-linear-to-b from-[#474747] to-[#383838] pr-[11px] pl-[5px] text-sm font-medium"
							>
								<Icon name="Pencil" className="size-4" />
								Tasks
							</button>
						</div>
						<div className="flex h-5 shrink-0 items-center gap-[9px] pr-0.5">
							<h2 className="flex-1 pl-3 text-center text-sm font-medium">Tasks</h2>
							<DockIcon type="shade" />
							<DockIcon type="float" />
						</div>
						<TasksPanel />
						<div className="flex h-[26px] shrink-0 items-center gap-[9px] pt-1.5 pr-0.5">
							<h2 className="flex-1 pl-3 text-center text-sm font-medium">Report view</h2>
							<DockIcon type="shade" />
							<DockIcon type="float" />
							<DockIcon type="close" />
						</div>
						<div
							role="log"
							className="h-36 shrink-0 bg-[#444] px-[3px] pt-[3px] font-['DejaVu_Sans_Mono',monospace] text-[11px] leading-[13px] whitespace-pre-wrap"
						>
							{report.map((line) => (
								<p key={line.text} className={line.color}>
									{line.text}
								</p>
							))}
						</div>
					</aside>

					<section className="flex min-w-0 flex-1 flex-col pl-0.5">
						<div className="relative min-h-0 flex-1">
							<Scene />
							<NavCube />
							<AxisCross />
						</div>
						<div role="tablist" className="flex h-[35px] shrink-0 items-start gap-px">
							<DocTab label="Start" />
							<DocTab label="chair : 1*" icon="Document" active />
							<DocTab label="Spreadsheet*" icon="Table" />
						</div>
					</section>
				</main>

				<footer className="flex h-[29px] shrink-0 justify-end gap-[7px] overflow-hidden pt-[3px]">
					<StatusSelect label="Notifications" value="2" icon="Notification" className="w-[95px] pl-5" />
					<StatusSelect label="Navigation style" value="CAD" icon="Mouse" className="w-[95px] pl-[35px]" />
					<StatusSelect label="Dimensions" value="257,23 mm x 163,23 mm" className="w-[183px] pl-[3px]" />
				</footer>
			</div>
		</div>
	)
}
